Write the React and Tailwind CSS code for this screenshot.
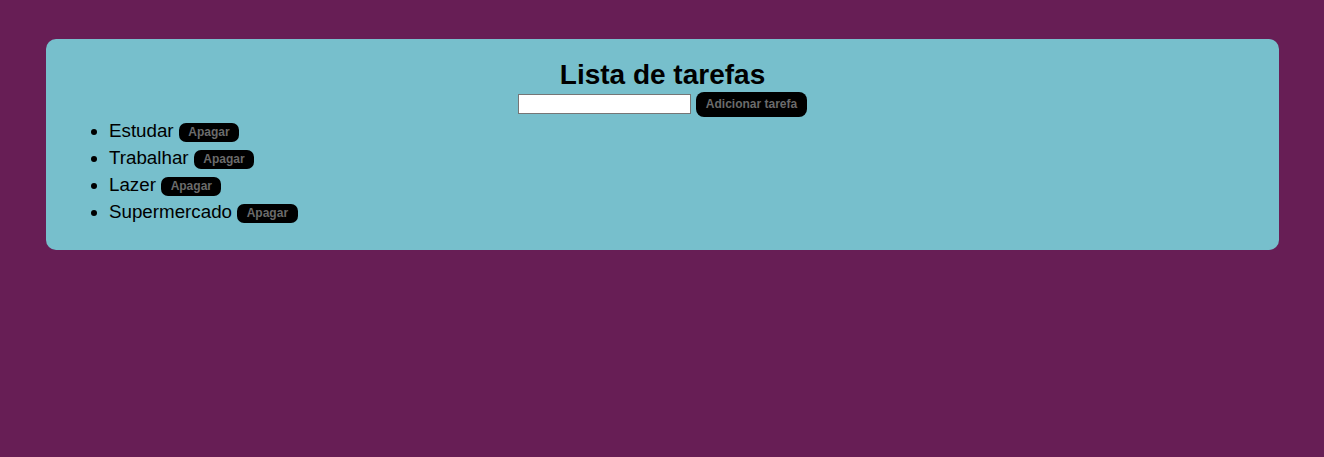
const tarefas = ['Estudar', 'Trabalhar', 'Lazer', 'Supermercado']

export default function App() {
  return (
    <div className="min-h-[457px] bg-[#671e55] pl-[46px] pr-[45px] pt-[39px] font-['Liberation_Sans',Arial,sans-serif] text-black">
      <div className="rounded-[10px] bg-[#77bfcc] px-[23px] pt-[20px] pb-[25px]">
        <h1 className="text-center text-[28px] font-bold leading-[32px]">Lista de tarefas</h1>
        <div className="flex h-[26px] items-center justify-center gap-[5px]">
          <input type="text" className="h-[20px] w-[173px] border border-[#767676] bg-white px-1 text-[13px] outline-none" />
          <button className="h-[25px] rounded-[8px] bg-black px-[9.5px] text-[12px] font-bold text-[#6b6b6b]">
            Adicionar tarefa
          </button>
        </div>
        <ul className="list-disc pl-[40px] text-[18.75px]">
          {tarefas.map((t) => (
            <li key={t} className="h-[27px] leading-[27px]">
              {t}{' '}
              <button className="inline-block h-[19px] rounded-[7px] bg-black px-[9.5px] align-middle text-[12px] font-bold leading-[19px] text-[#6b6b6b]">
                Apagar
              </button>
            </li>
          ))}
        </ul>
      </div>
    </div>
  )
}
